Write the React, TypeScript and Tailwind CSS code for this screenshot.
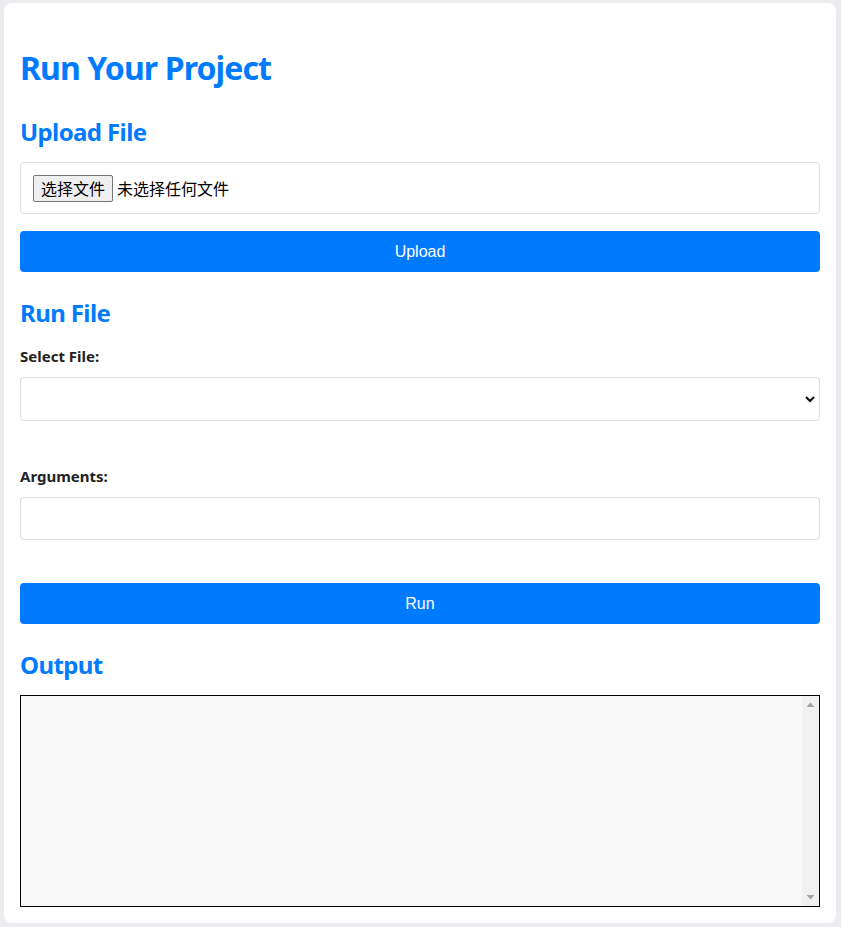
import React from "react";

const headingFont = { fontFamily: '"Noto Sans", "Open Sans", sans-serif' };

const App: React.FC = () => {
  return (
    <div className="min-h-screen bg-[#ececf0] pt-[3px] pl-[4px] pr-[5px] pb-[4px]">
      <div
        className="flex flex-col bg-white rounded-lg px-4 pt-[45px] pb-4 text-[#222]"
        style={headingFont}
      >
        {/* Title */}
        <h1 className="text-[32px] leading-[40px] font-bold tracking-[-0.028em] text-[#007bff]">
          Run Your Project
        </h1>

        {/* Upload */}
        <h2 className="mt-[28px] text-[24px] leading-[32px] font-bold tracking-[-0.025em] text-[#007bff]">
          Upload File
        </h2>
        <div className="mt-[14px] h-[52px] flex items-center gap-1 px-3 border border-[#ddd] rounded">
          <button
            className="h-[27px] px-[7px] border border-[#767676] bg-[#efefef] rounded-[2px] text-[16px] leading-none text-black"
            style={{ fontFamily: '"Noto Sans CJK SC", sans-serif' }}
          >
            选择文件
          </button>
          <span
            className="text-[16px] text-black"
            style={{ fontFamily: '"Noto Sans CJK SC", sans-serif' }}
          >
            未选择任何文件
          </span>
        </div>
        <button
          className="mt-[17px] h-[41px] w-full rounded bg-[#007bff] text-white text-[16px]"
          style={{ fontFamily: '"Liberation Sans", Arial, sans-serif' }}
        >
          Upload
        </button>

        {/* Run */}
        <h2 className="mt-[25px] text-[24px] leading-[32px] font-bold tracking-[-0.025em] text-[#007bff]">
          Run File
        </h2>
        <label className="mt-[15px] text-[15px] leading-[24px] font-bold">Select File:</label>
        <div className="relative mt-[9px]">
          <select className="appearance-none h-[44px] w-full border border-[#ddd] rounded bg-white px-2 outline-none" />
          <svg
            className="absolute right-[4px] top-[17px] pointer-events-none"
            width="12"
            height="10"
            viewBox="0 0 12 10"
          >
            <path d="M2 3 L6 7 L10 3" fill="none" stroke="#111" strokeWidth="2.2" />
          </svg>
        </div>

        <label className="mt-[43px] text-[15px] leading-[24px] font-bold">Arguments:</label>
        <input
          type="text"
          className="mt-[9px] h-[43px] w-full border border-[#ddd] rounded px-2 outline-none"
        />

        <button
          className="mt-[43px] h-[41px] w-full rounded bg-[#007bff] text-white text-[16px]"
          style={{ fontFamily: '"Liberation Sans", Arial, sans-serif' }}
        >
          Run
        </button>

        {/* Output */}
        <h2 className="mt-[25px] text-[24px] leading-[32px] font-bold tracking-[-0.025em] text-[#007bff]">
          Output
        </h2>
        <div className="mt-[14px] h-[212px] flex border border-black bg-[#f8f8f8]">
          <textarea className="flex-1 resize-none bg-transparent outline-none p-2 text-sm" readOnly />
          <div className="w-[17px] bg-[#f1f1f1] flex flex-col items-center justify-between py-[6px]">
            <svg width="9" height="5" viewBox="0 0 9 5">
              <path d="M0.5 5 L4.5 0.5 L8.5 5 Z" fill="#a3a3a3" />
            </svg>
            <svg width="9" height="5" viewBox="0 0 9 5">
              <path d="M0.5 0 L4.5 4.5 L8.5 0 Z" fill="#a3a3a3" />
            </svg>
          </div>
        </div>
      </div>
    </div>
  );
};

export default App;
